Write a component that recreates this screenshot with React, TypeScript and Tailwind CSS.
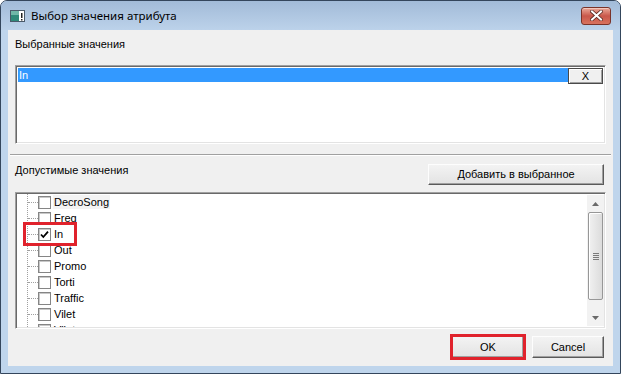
const items = ["DecroSong", "Freq", "In", "Out", "Promo", "Torti", "Traffic", "Vilet", "Vilet"];

function WinButton({ label, className }: { label: string; className?: string }) {
  return (
    <div
      className={`flex items-center justify-center border border-t-[#fdfdfd] border-l-[#fdfdfd] border-r-[#5a5a5a] border-b-[#5a5a5a] bg-gradient-to-b from-[#f3f3f3] to-[#e3e3e3] shadow-[inset_-1px_-1px_0_#a0a0a0] text-[11px] text-black ${className ?? ""}`}
    >
      {label}
    </div>
  );
}

function CheckBox({ checked }: { checked?: boolean }) {
  return (
    <div className="relative h-[13px] w-[13px] shrink-0 border border-[#858585] bg-white shadow-[inset_1px_1px_0_#c8c8c8]">
      {checked && (
        <svg viewBox="0 0 11 11" className="absolute left-0 top-0 h-[11px] w-[11px]">
          <path d="M2 5.5 L4.3 8 L9 2.6" fill="none" stroke="#000" strokeWidth="1.8" />
        </svg>
      )}
    </div>
  );
}

function TitleIcon() {
  return (
    <svg width="15" height="12" viewBox="0 0 15 12">
      <rect x="0.5" y="0.5" width="14" height="11" fill="#fff" stroke="#4a5a6a" />
      <rect x="1" y="1" width="8" height="10" fill="#2f8a7a" />
      <rect x="1" y="1" width="8" height="4" fill="#6fb7a8" />
      <rect x="11" y="3" width="1.5" height="5" fill="#222" />
      <rect x="11" y="9" width="1.5" height="1.5" fill="#222" />
    </svg>
  );
}

function CloseButton() {
  return (
    <div className="flex h-[18px] w-[30px] items-center justify-center rounded-[3px] border border-[#7a3329] bg-gradient-to-b from-[#e9a99a] via-[#c9574a] to-[#d8735f] shadow-[inset_0_1px_0_#f3c7bc]">
      <svg width="13" height="11" viewBox="0 0 13 11">
        <path d="M2 1.5 L11 9.5 M11 1.5 L2 9.5" stroke="#5a2a22" strokeWidth="3.6" strokeLinecap="square" />
        <path d="M2 1.5 L11 9.5 M11 1.5 L2 9.5" stroke="#fff" strokeWidth="2" strokeLinecap="square" />
      </svg>
    </div>
  );
}

function ScrollBar() {
  return (
    <div className="flex h-full w-[17px] shrink-0 flex-col bg-[#f2f2f2]">
      <div className="flex h-[17px] items-center justify-center">
        <svg width="7" height="4" viewBox="0 0 7 4">
          <path d="M0 4 L3.5 0 L7 4 Z" fill="#6a6a6a" />
        </svg>
      </div>
      <div className="mx-[1px] flex h-[88px] items-center justify-center rounded-[2px] border border-[#979797] bg-gradient-to-r from-[#f1f1f1] to-[#dcdcdc] shadow-[inset_1px_1px_0_#fff]">
        <div className="flex flex-col gap-[1px]">
          <div className="h-[1px] w-[6px] bg-[#7a7a7a]" />
          <div className="h-[1px] w-[6px] bg-[#7a7a7a]" />
          <div className="h-[1px] w-[6px] bg-[#7a7a7a]" />
          <div className="h-[1px] w-[6px] bg-[#7a7a7a]" />
        </div>
      </div>
      <div className="flex-1" />
      <div className="flex h-[17px] items-center justify-center">
        <svg width="7" height="4" viewBox="0 0 7 4">
          <path d="M0 0 L3.5 4 L7 0 Z" fill="#6a6a6a" />
        </svg>
      </div>
    </div>
  );
}

const sunken =
  "border border-t-[#a0a0a0] border-l-[#a0a0a0] border-r-white border-b-white shadow-[inset_1px_1px_0_#696969,inset_-1px_-1px_0_#e3e3e3]";

export default function App() {
  return (
    <div className="flex h-[374px] w-[621px] flex-col overflow-hidden rounded-t-[7px] border border-[#34465c] bg-[#bfd5ec] font-['Liberation_Sans',Arial,sans-serif] text-black">
      {/* title bar */}
      <div className="flex h-[29px] shrink-0 items-center bg-gradient-to-b from-[#a2bbd8] to-[#bcd2ea] pl-[9px] pr-[9px]">
        <TitleIcon />
        <span className="ml-[6px] font-['Noto_Sans',sans-serif] text-[11.5px] text-black">Выбор значения атрибута</span>
        <div className="flex-1" />
        <CloseButton />
      </div>

      {/* client */}
      <div className="flex flex-1 px-[7px] pb-[7px]">
        <div className="flex flex-1 flex-col bg-[#f0f0f0]">
          <div className="h-[35px] pl-[7px] pt-[7px] text-[11px] leading-[14px]">Выбранные значения</div>
          <div className={`mx-[7px] h-[79px] bg-white p-[2px] ${sunken}`}>
            <div className="flex h-[15px] items-start">
              <div className="flex h-[14px] flex-1 items-center bg-[#3399ff] pl-[1px] text-[11px] text-white">In</div>
              <div className="flex h-[16px] w-[35px] items-center justify-center border border-[#4a4a4a] bg-[#f0f0f0] text-[11px] shadow-[inset_1px_1px_0_#fff,inset_-1px_-1px_0_#a0a0a0]">
                X
              </div>
            </div>
          </div>
          <div className="mx-[2px] mt-[10px] h-[2px] border-t border-b border-t-[#a0a0a0] border-b-white" />

          <div className="flex h-[36px] items-start px-[7px]">
            <div className="mt-[7px] text-[11px] leading-[14px]">Допустимые значения</div>
            <div className="flex-1" />
            <WinButton label="Добавить в выбранное" className="mt-[8px] h-[21px] w-[176px] mr-[2px]" />
          </div>

          <div className={`relative mx-[7px] flex h-[137px] bg-white p-[1px] ${sunken}`}>
            <div className="relative flex-1 overflow-hidden">
              <div className="absolute left-[10px] top-0 h-full border-l border-dotted border-[#a0a0a0]" />
              {items.map((name, i) => (
                <div key={i} className="flex h-[16px] items-center">
                  <div className="ml-[11px] w-[10px] border-t border-dotted border-[#a0a0a0]" />
                  <CheckBox checked={name === "In"} />
                  <span
                    className={`ml-[2px] px-[1px] text-[11px] leading-[14px] ${i === 0 ? "bg-[#f3f3f3]" : ""}`}
                  >
                    {name}
                  </span>
                </div>
              ))}
              <div className="absolute left-[6px] top-[28px] h-[24px] w-[54px] border-[3px] border-[#e0222c]" />
            </div>
            <div className="py-[1px]">
              <ScrollBar />
            </div>
          </div>

          <div className="mt-[7px] flex justify-end gap-[8px] pr-[9px]">
            <div className="relative">
              <WinButton label="OK" className="h-[22px] w-[72px]" />
              <div className="absolute -inset-[2px] border-[3px] border-[#e0222c]" />
            </div>
            <WinButton label="Cancel" className="h-[22px] w-[72px]" />
          </div>
        </div>
      </div>
    </div>
  );
}
